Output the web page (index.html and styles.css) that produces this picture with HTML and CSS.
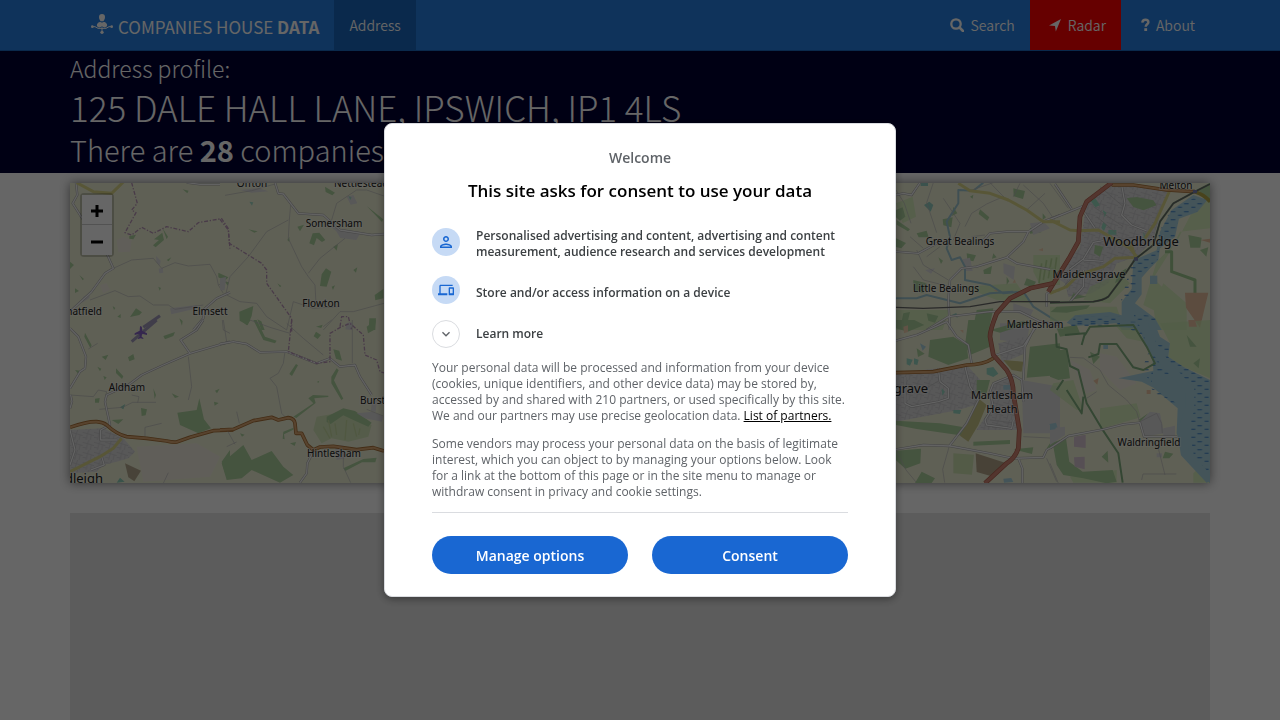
FILE: index.html
```html
<!DOCTYPE html>
<html lang="en">
<head>
<meta charset="utf-8">
<meta name="viewport" content="width=device-width, initial-scale=1">
<title>125 Dale Hall Lane, Ipswich - Companies House Data</title>
<link rel="stylesheet" href="styles.css">
</head>
<body>
<div class="page">
  <header class="navbar">
    <nav class="container nav">
      <a class="brand" href="#">
        <svg class="brand-icon" viewBox="0 0 66 60" aria-hidden="true">
          <path d="M33 0c6 0 9 4 9 9 0 6-3 10-5 13h-8c-2-3-5-7-5-13 0-5 3-9 9-9z"/>
          <path d="M20 28c4-5 9-5 13-2 4-3 9-3 13 2 4 5 3 10-2 12-5 1-8-1-11-3-3 2-6 4-11 3-5-2-6-7-2-12z"/>
          <path d="M4 38h8l9 5h24l9-5h8M33 40v12" fill="none" stroke="#fff" stroke-width="3"/>
          <circle cx="4" cy="38" r="4"/><circle cx="62" cy="38" r="4"/><circle cx="33" cy="55" r="5"/>
        </svg>
        <span>COMPANIES HOUSE <b>DATA</b></span>
      </a>
      <a class="nav-link active" href="#">Address</a>
      <span class="spacer"></span>
      <a class="nav-link" href="#"><svg class="nav-icon" viewBox="0 0 14 14" aria-hidden="true"><circle cx="6" cy="6" r="4.7" fill="none" stroke="#fff" stroke-width="2.3"/><path d="M9.5 9.500l3.500 3.500" stroke="#fff" stroke-width="2.600" stroke-linecap="round"/></svg>Search</a>
      <a class="nav-link radar" href="#"><svg class="nav-icon" viewBox="0 0 14 14" aria-hidden="true"><path d="M13 1L1 7.500l6 .5.800 5.500z"/></svg>Radar</a>
      <a class="nav-link about" href="#"><svg class="nav-icon narrow" viewBox="0 0 9 14" aria-hidden="true"><path d="M1.300 4.600C1.500 2.600 2.800 1.800 4.400 1.800c1.800 0 3 .9 3 2.400 0 2-2.700 2.100-2.700 4.500" fill="none" stroke="#fff" stroke-width="2.400"/><path d="M3.300 10.200h2.800V13H3.300z"/></svg>About</a>
    </nav>
  </header>

  <section class="banner">
    <div class="container">
      <p class="kicker">Address profile:</p>
      <h1>125 DALE HALL LANE, IPSWICH, IP1 4LS</h1>
      <h2>There are <b>28</b> companies</h2>
    </div>
  </section>

  <main class="container content">
    <div class="map">
      <svg class="map-art" viewBox="70 183 1140 300" preserveAspectRatio="xMidYMid slice" role="img" aria-label="Map of the Ipswich area">
        <defs>
          <pattern id="reeds" width="40" height="24" patternUnits="userSpaceOnUse"><path d="M2 5h14M24 16h12" stroke="#3f82c8" stroke-width="3"/></pattern>
          <pattern id="streets" width="34" height="30" patternUnits="userSpaceOnUse"><path d="M0 7l15 4 4-11M15 11l-5 19M15 11l19 6M26 15l-3 15M0 22l12 2" fill="none" stroke="#c4c4c6" stroke-width="2"/></pattern>
        </defs>
        <rect class="land" x="70" y="183" width="1140" height="300"/>

        <g class="tile" transform="translate(60 170) scale(.3333)">
          <path class="bare" d="M170 210l20-10 25 10-5 35-35 2zM120 345l20-5 10 20-20 10z"/>
          <path class="wood" d="M368 58l18 4-4 8zM208 198l20-4-8 14-12-2zM282 208l25-20 5 22-25 22-8-6 18-16zM308 175l16 25-4 8zM30 275l12 10-12 12zM58 315l14 12-4 4zM45 355l12 8-12 6zM295 350l8 4-4 8zM228 415l18 12-8 8-28 6zM158 408l8 6-4 6zM172 440l10-8v12zM320 270l14-8-8 12zM475 308l30 14-10 10-20-10zM495 335l12 2-4 10zM358 445l10 8-2 14z"/>
          <path class="built" d="M288 258l14 14-2 14-10-8zM296 296l12-2 2 14-12 2zM330 415l80-10 2 10-78 18zM70 380l20-10-2 14-22 14z"/>
          <path class="lane" d="M160 295l55-25 65-5 25 30 40-17 40 10 65-5 20 37 5 25 15 25M90 390l75-28 40 18 35-2 40 27h45l20 13 85-13M475 345l25-10"/>
          <path class="case" d="M48 38l4 37-14 25 22 35 80 115 20 45-25 15-40 55-65 60M510 367l-40 18-40 35v25l-30 35M380 38l40 5h60"/>
          <path class="road" d="M48 38l4 37-14 25 22 35 80 115 20 45-25 15-40 55-65 60M510 367l-40 18-40 35v25l-30 35M380 38l40 5h60"/>
          <path class="yellow" d="M50 38l50 27 55 5 35-34"/>
          <path class="bound" d="M215 38l17 62-17 20 13 8-33 60 20 7 30-23 35 18 40-20 65 15 30-27 70-12 20 30 5 60"/>
          <path d="M250 472l50-35" stroke="#a09ab8" stroke-width="9"/>
          <path d="M240 468l8 12h-8z" fill="#8461c4"/>
        </g>

        <g class="tile" transform="translate(220 170) scale(.3333)">
          <path class="wood" d="M315 50l30 18-8 8-20-10zM440 108l50 40-4 8zM268 220l10-30 20-2 18 22-10 6-16-12-8 22zM318 295l16 10-14 45-20-2 5-35zM400 300l12-8-4 16zM58 425l42-17-5 30-12 28-24-14zM464 375l26-18v28l-24 6zM448 445h20l-2 35h-20zM112 448l12 6 10 26h-10zM172 340l12 8-4 4zM232 170l20-6-12 20zM335 350l10-4-6 14zM180 65l24 12zM85 178l28 6-10 4zM288 470l20-6-4 10zM202 210l6-10v16zM340 230l14-8-4 20z"/>
          <path class="built" d="M330 168l45 12 48 6-14 24-48-6-12-20zM60 60l55-6 30 10-50 4zM380 80l20-5 12 25-20 4zM0 325l18-4-4 40H0zM380 460l16 4-4 16-16-2z"/>
          <path d="M88 95l12 2-4 10zM385 78l10 4-4 8z" fill="#a4d8c2"/>
          <path class="lane" d="M212 105l-4 45-3 55 40 85 20 30 20 25 3 55M205 150l-65 35-55 75-55 60-12 50M265 310l35-45 75-60M335 150l15-50 60-40h30l52 18M20 375l40 20 50 5 30 40 60 40M310 480l50-55h40l92-25M200 480l20-85 60 20 80-5M15 76l80-14 70-20"/>
          <path class="case" d="M165 38l10 32 15 2 45 58 75 5 50 45 95 15 40-3"/>
          <path class="road" d="M165 38l10 32 15 2 45 58 75 5 50 45 95 15 40-3"/>
          <path class="bound" d="M0 148l25 32 3 40 97 60 15 20v40l75 105v40M360 470l5-30h20l10 40"/>
        </g>

        <g class="tile" transform="translate(60 320) scale(.3333)">
          <path class="built" d="M30 330l100-5 60 30 35 40-20 20-35 10-40 10-20 20-80 5z"/>
          <path d="M30 330l100-5 60 30 35 40-20 20-35 10-40 10-20 20-80 5z" fill="url(#streets)"/>
          <path class="bare" d="M230 380l180-10 70 40-30 60-200 15zM215 240l75 18z"/>
          <path class="wood" d="M352 278l58-8 8-35 14 63 21 27-38 15-55-25zM510 390l-25 35 12 40 13 10zM310 48l35-12-5 12-25 10zM75 38l20 38-4 8-18-34zM125 110l20-6-8 16zM204 112l16-10 4 16-16 6zM168 145l22 24-4 8-18-18zM112 140l12 6-4 8zM243 264l18 4-4 18-12 2zM105 236l14-2-2 14h-12zM280 205l8 20-4 12zM335 220l22 10-12 4zM465 212l14-6-8 14zM462 245l14 4-12 8zM155 300l35-2-15 14zM45 150l15 2-5 10zM130 168l10 4-6 8z"/>
          <path d="M195 430l48 22-20 32-18-12z" fill="#b5a98e"/>
          <path d="M180 262l16-10-6 16zM170 488l10-15 14 12z" fill="#8fcdb8"/>
          <path class="lane" d="M85 87l28-17M385 110l10 90-10 40M30 225l70 5 15-20 25 5-5 20M118 268l70-6 30-15h70M215 225l22 5-4 18M325 458l-15 32M255 350v-28l50-12M487 0l3 30 20 10"/>
          <path class="case" d="M430 0l-20 30-48 30 28 40M510 65l-120 35-80 35-65 30-40 30-65 30-5 20 15 70-28 15v30h50M30 25l25 25 23 60-3 35-15 10-30 50M32 225l4 20-6 20M30 330l15 60-15 45M125 410l8 25-40 15"/>
          <path class="road" d="M430 0l-20 30-48 30 28 40M510 65l-120 35-80 35-65 30-40 30-65 30-5 20 15 70-28 15v30h50M30 25l25 25 23 60-3 35-15 10-30 50M32 225l4 20-6 20M30 330l15 60-15 45M125 410l8 25-40 15"/>
          <path class="yellow" d="M30 455l90-45 40-25 25-30"/>
          <path class="orange-case" d="M30 322q50-18 80-17 20 2 30 10 30 28 60 35l60 5 60 8q20 5 30 3l40-14 70-20 60-2"/>
          <path class="orange" d="M30 322q50-18 80-17 20 2 30 10 30 28 60 35l60 5 60 8q20 5 30 3l40-14 70-20 60-2"/>
          <path d="M215 65l75-65" stroke="#a09ab8" stroke-width="9"/>
          <path d="M240 20c3-3 6 0 6 4v8l15 8v5l-15-4-1 9 5 4v3l-8-2-8 2v-3l5-4-1-9-14 4v-5l15-8z" fill="#8461c4"/>
        </g>

        <g class="tile" transform="translate(220 320) scale(.3333)">
          <path class="golf" d="M290 290l30-5 60-10 75 40-10 35-60 15-50-10-30 15-25-40z"/>
          <path class="wood" d="M5 430l65-55 25 45 60-27 35 47 30 25-40 23-85-38-30 25-45 5zM320 290l50-25 35 8 50 35-10 12-45-20-30-14-38 26-12-6zM220 290l60-40-15-15 14-10 46 2v4l-42 4 4 14-58 45zM350 145l6 6-14 30 28 55-6 4-30-50v-20zM288 35l15 10-10 12-12-8zM440 20l28-20-6 30-18 10zM110 0l25 50 35 12-5 8-35-10-30-60zM62 0h30l-12 16zM340 88l18 4 8 30-18-6zM208 162l20-30 6 4-18 32zM190 335l30-12v6l-28 14 2 15-6-2zM60 340l14 4-8 6zM210 370l18-4-4 12zM370 445l60-28 40-4-4 14h-40l-50 26zM290 186l8-4-2 6z"/>
          <path d="M325 300l10 50M345 310l5 35M380 300l-5 60M400 310l10 40M310 320l20 35M420 325l-4 20" stroke="#c9dba4" stroke-width="4" fill="none"/>
          <path class="built" d="M345 380l25-5 5 40-25 5zM455 245l16-4-4 35-14-4zM410 280l50-5 30 15-5 15-50-10zM378 10l16-4 8 12-16 8z"/>
          <path class="lane" d="M195 95l-5 35-15 30-25 15 20 25 15 80 15 15M200 10l50 45 60 50M310 20l25-20M20 328l25 45M20 380l30-14M50 275l8 35M370 400v40l22 48M397 0v130M10 0l10 65M90 0l60 22 60 18M440 268l50 20"/>
          <path class="case" d="M0 72l40-7 40 7 40 25 80-2 90 35 40-15 30 25 45-5 15 35 35 55M280 395l-18 35-2 30-20 28"/>
          <path class="road" d="M0 72l40-7 40 7 40 25 80-2 90 35 40-15 30 25 45-5 15 35 35 55M280 395l-18 35-2 30-20 28"/>
          <path class="orange-case" d="M0 330l40-2 60-26 55-10 20 8 30-7q18 2 20 17l3 30h17l17 35 18 15 20-9 40-2 70 10 50-6 32 10"/>
          <path class="orange" d="M0 330l40-2 60-26 55-10 20 8 30-7q18 2 20 17l3 30h17l17 35 18 15 20-9 40-2 70 10 50-6 32 10"/>
          <path class="bound" d="M215 0l-10 95 85 35 40-5V40l35-20 25-10 40 35 5 60 35 15 10 35 20 6"/>
        </g>

        <g class="tile" transform="translate(890 170) scale(.3333)">
          <path class="grass" d="M18 420h160l-20 60H18zM220 350l160-10 40 60-100-10zM430 255h80v90h-60l-20-40zM18 100l50-20 10 60-40 20z"/>
          <path class="wood" d="M18 120l20-8 8 28-16 12-12-10zM370 55l35 8-6 24-28-8zM270 118l28 24-6 10-26-20zM158 148l30-6-4 30-24-6zM420 175l30-12 4 24-34 4zM80 190l30-8 6 20H86zM18 205l30 14-14 16-16-4zM260 420l50-5-12 60-30 5-14-30zM410 325l28 10-8 16-28-6zM70 330l40 10-10 30-30-10zM20 150l40 28-6 6-34-20zM310 250l10 12-14 4zM280 300l26-12-4 24h-20zM350 320l8 14-8 10zM145 262l14 10-6 10zM110 430l35 8-10 20-20-6zM40 430l20-4-8 34-20 8zM458 130l10 12-10 8zM240 80l10-6-2 12zM230 250l28 6-8 18-18-4zM190 110l12 20-16 8z"/>
          <path d="M102 105l16-10 12 10-8 20zM92 38h22v10H92zM185 435l14-6 4 14z" fill="#94cdc0"/>
          <path class="built" d="M105 300l30-5-12 16zM218 268l22-5 8 40h-20zM340 280l35 10-4 40-30-20zM420 160l40-5 20 20-50 20zM370 400l60 20-10 20-50-15z"/>
          <path d="M455 280l-8 60M470 270l-10 60M485 265l-10 60M500 262l-8 60" stroke="#b8d69a" stroke-width="5"/>
          <path d="M445 240l14-6v10zM368 338l6-10 4 10zM310 360h12v6z" fill="#f0cfae"/>
          <path class="river" d="M280 38l-30 24-45-2v40l-35 55 10 45-10 35 15 35 25-8 15 28v40l75 15 40 25 60-5 30 45 80 50M18 385h62l30-10 100 25 90-30 70-5"/>
          <path class="lane" d="M225 170l20-40 45-28 50-22 15 10M300 38l55 57M400 45l60 55 40 60M160 85l50 75-20 50M18 60l25 40 20 60M80 240l20 45 75 45M60 200l40 35M245 200l40-5M180 350l-80-20-30-40M130 38l-20 60 30 90M410 120l55-50M110 260l40-30M390 40l-20 40M240 62l70-24"/>
          <path class="case" d="M18 245l67 5 65-35M18 75l22-5 25 5 25-37M110 480l65-40 125-15h90l60 30 60 10M180 480l-5-90 5-60 35-35 45-5 90-28 50-47 15-30h-65l-50 5-30 32M415 185l45-30 50-20M350 262l30 18 110 20M470 370l40-10M470 370v40"/>
          <path class="road" d="M18 245l67 5 65-35M18 75l22-5 25 5 25-37M110 480l65-40 125-15h90l60 30 60 10M180 480l-5-90 5-60 35-35 45-5 90-28 50-47 15-30h-65l-50 5-30 32M415 185l45-30 50-20M350 262l30 18 110 20M470 370l40-10M470 370v40"/>
          <path class="yellow" d="M205 40l35 22 60 8 55 20 55 30 50 35h50"/>
          <path class="rail" d="M18 412l82 3 140-5 90-15h180"/>
        </g>

        <g class="tile" transform="translate(1050 170) scale(.3333)">
          <path class="built" d="M110 95l80-50 165 10-25 80-20 75-50 50-60 20-25 60-50 30-70 10-10-40-30-20 75-90z"/>
          <path d="M110 95l80-50 165 10-25 80-20 75-50 50-60 20-25 60-50 30-70 10-10-40-30-20 75-90z" fill="url(#streets)"/>
          <path class="grass" d="M440 100l40-15v90l-90 10-30 60-50 80 50 50-20 60-60-30 40-130 60-60zM120 350l90-40 30 30-60 60-80-10zM340 340l70 60v80h-90l-10-70zM0 410h200l10 30-210 15zM0 290h15l-5 60-10 10z"/>
          <path class="wood" d="M230 85l30-4 50 10 10 15-40 15-30-10zM135 225l25 5-10 30-18-10zM205 310l25-15-10 30-25 15zM20 410l100-4-10 10-60 12-48-2zM415 195l40 8-4 30h-30zM445 60l35-20v60zM450 240l25-8-6 28zM70 370l40 10-50 10z"/>
          <path d="M345 245h20v60l70 25v50" fill="none" stroke="#9dc890" stroke-width="9"/>
          <path d="M405 368h70l-25 105-42-60zM452 210l28-4v12z" fill="#e7bd9d"/>
          <path d="M120 90l14-8 16 24-14 6zM158 120l12 8-6 14zM175 180h24v14h-24zM160 155l10 10-8 18-8-10zM280 185l10 20-8 10z" fill="#9adcc0"/>
          <path class="water" d="M430 75l42 15-30 36-55 20-12 55-45 34-5 35-25 25-25 28v50l-20 27 60 45 20 35H215l-15-20-130 8-20-10 25-22 105-10 35 10v-40l30-40 5-85 70-30 10-56 35-65z"/>
          <path class="water" d="M300 317h22v25h-22z"/>
          <path d="M430 85l40 5-30 36-55 20-12 55-45 34-5 35-60 45-5 50-45 35V390l35-120 70-30 10-56 35-65zM70 440h140v28H70zM250 430l65 10 10 40h-60z" fill="url(#reeds)"/>
          <path class="lane" d="M0 40l55 75M150 50l70 60M130 110l90 60M200 210l60-10M140 140l60 50M40 350l50-50"/>
          <path class="case" d="M0 148l105-42M15 42l50 75M105 130l30 45M215 45l10 55-10 35 30 30 45 18M160 212l-30 5-30 50-40 30M100 270l60 4M100 300v50l-40 45"/>
          <path class="road" d="M0 148l105-42M15 42l50 75M105 130l30 45M215 45l10 55-10 35 30 30 45 18M160 212l-30 5-30 50-40 30M100 270l60 4M100 300v50l-40 45"/>
          <path class="yellow" d="M0 150l60 30 25 2 60-2 35 20 60 35 20 25M0 370l50-20 35-35 75-25 35-25 70-3M360 60l-45 100-30 45M240 215l14 40"/>
          <path class="orange-case" d="M185 45h65l100 15 85 5"/><path class="orange" d="M185 45h65l100 15 85 5"/>
          <path d="M435 65q30 10 45 30" fill="none" stroke="#b5a848" stroke-width="11"/>
          <path class="foot" d="M0 398l130-3q30-4 45-15l45-60 35-52 55-43 20-70 40-55 65-35 45-23"/>
          <path class="rail" d="M0 398l130-3q30-4 45-15l45-60 35-52 55-43 20-70 40-55 65-35 45-23"/>
          <path class="trunk-case" d="M185 38l-75 57-20 45-5 75-25 45-65 105"/><path class="trunk" d="M185 38l-75 57-20 45-5 75-25 45-65 105"/>
          <path d="M252 262h12v10h-12zM429 60h12v10h-12z" fill="#7981b0"/>
        </g>

        <g class="tile" transform="translate(890 320) scale(.3333)">
          <path class="built" d="M18 160l212-25 50 55-25 65-50 15-187 35zM300 200l70-40 20 170H260l40-60zM325 70l80-20v50l-70 30zM395 180l115 20v140H400zM330 10h90l-10 60-80-10z"/>
          <path d="M18 160l212-25 50 55-25 65-50 15-187 35zM300 200l70-40 20 170H260l40-60zM325 70l80-20v50l-70 30z" fill="url(#streets)"/>
          <path class="wood" d="M235 0h60l5 80-60 25-15-30zM18 0h55l30 15-50 20-35-10zM120 60l70-10 40 25 5 40-60 20-60-25zM420 80l90-10v95l-100 8zM18 302l132 8 90 15-20 22-140-20-62-12zM250 365l110-5v12l-110 5zM18 392l75-6-2 44-45 16-28-25zM95 455l40 20-10 14H75zM300 30l100-28 20 8-90 28zM370 388l60-6-4 20zM80 85l24 16-20 10zM260 180h40l-10 40h-30z"/>
          <path d="M265 235l25 20-25 60-30 50-25-18 30-50zM340 120l60 5-5 30-30-5z" fill="#c9c587"/>
          <path d="M257 400l88 28-35 42-50-14z" fill="#b5a589"/><path d="M190 400l62 4-6 60-56-4z" fill="#cfe3b2"/>
          <path d="M50 115l18 4-8 18-10-4zM72 115l14 4-4 16-10-2zM190 270h24l-4 12-20-2zM290 145l20-4 15 20-15 10-20-8zM155 205l10 10-8 12z" fill="#9ad6c2"/>
          <path class="water" d="M478 312l20-4 5 15-15 6zM340 476l24-2 6 12-28 2zM90 70l18 10-10 12zM340 195h20v14h-20z"/>
          <path d="M40 20l14-4v20l-12 4zM210 30h10v10z" fill="#f0cfae"/>
          <path class="lane" d="M18 390l30 60 30 36M178 378l-20 70 6 40M400 350l80 4 30-20M470 415l30 70M150 180l-50 30M300 300l80 10"/>
          <path class="case" d="M18 62l62-17 90-40M170 5l30 45 35 25 10 55M310 108l90-30 45-68M225 140l15 60 25 40-35 70-52 68M18 388l82-13 80 3 120 22 70 15 90-3 10-22 40-25M400 245l-5-65-25-15-60 25-10 25 10 45-25 40 5 15 75 10 5-25M400 180l5-100 30-60M145 145l5 40 25 20v30l-30 10-80 15-20-10v-80M385 415l12 30v44"/>
          <path class="road" d="M18 62l62-17 90-40M170 5l30 45 35 25 10 55M310 108l90-30 45-68M225 140l15 60 25 40-35 70-52 68M18 388l82-13 80 3 120 22 70 15 90-3 10-22 40-25M400 245l-5-65-25-15-60 25-10 25 10 45-25 40 5 15 75 10 5-25M400 180l5-100 30-60M145 145l5 40 25 20v30l-30 10-80 15-20-10v-80M385 415l12 30v44"/>
          <path class="orange-case" d="M18 158l112-3 100-20q50 0 80-20"/><path class="orange" d="M18 158l112-3 100-20q50 0 80-20"/>
          <path class="trunk-case" d="M490 -110l-70 15-60 30-40 45q-20 50-20 70l10 55 40 45q20 30 20 70l18 110-3 55q-10 30-35 45l-65 60"/>
          <path class="trunk" d="M490 -110l-70 15-60 30-40 45q-20 50-20 70l10 55 40 45q20 30 20 70l18 110-3 55q-10 30-35 45l-65 60"/>
        </g>

        <g class="tile" transform="translate(1050 320) scale(.3333)">
          <path class="grass" d="M330 10l150-10v175l-80-35-45-30 5-40zM150 265l110-15 12 42-122 35zM200 20l60 5 20 40-50-10zM10 190l60-10 30 90H80L0 210zM60 470l140-20v38H70zM430 460l20-20 30 48h-50z"/>
          <path class="wood" d="M0 90h50l10 85-35 5-25-10zM20 25l60-10 10 25-60 10zM120 95l30 15-20 22zM0 370l48-15 10 70 40 30 90-5 12 35-30 5-70-15-60-10-20-30-10-55-20 5zM155 410l18-18 2 36zM345 395l25 6-12 14h-20zM410 45l10 35h20zM430 130l20-15-4 30zM265 300l30-20-20 24z"/>
          <path class="bare" d="M150 100l50 10 60 80-50 20-60-60zM60 120l60 30 20 60-30 10z"/>
          <path class="water" d="M225 0h85l20 50 30 20-5 40 45 30 80 40v310l-40-38-40-52-20-60 3-75-73-62-35-18-70-10 105-23-2-30-36-82z"/>
          <path d="M310 60l50 10-5 40 45 30 80 40v310l-40-38-20-112 10-110-60-60-60-20-5 40-30-40zM300 200l80 50v20l-60-45z" fill="url(#reeds)"/>
          <path d="M220 5h50l10 30 30 40-40-20zM60 0h120v18H60z" fill="url(#reeds)"/>
          <path d="M275 0l30 70 40 60 75 80v60l-25 60 10 70 75 80" fill="none" stroke="#aad3df" stroke-width="26"/>
          <path class="foot" d="M18 40l2 40 30 8 10 50 25 12 25 100 45 75 50 75 13 88M45 45l60-5-10 35M105 45l15-25 130-5 40 65 25 50-35 20-30-8-50-70h-50l-5 30-30 10M20 210l20-30M50 210l45 70 5-50"/>
          <path d="M72 350l35-6v40l-35-4zM72 412l32-2v38l-30-8z" fill="#d7c5d1"/>
          <path d="M415 0h20l6 20h-24zM130 182l16-8-4 20zM290 210h12v12h-12z" fill="#ebc4a4"/>
          <path class="built" d="M270 305l30-30 30 5 12 60-60 10zM340 325l35-8v35h-35zM0 325l45-5v25L0 375zM320 400h16v12h-16z"/>
          <path class="water" d="M0 312l20 2-4 14-16 2zM160 75h14v12h-14z"/>
          <path class="lane" d="M60 112l40 2 50 36 25 45 55 45 30 35 10 35M270 305l50-25 15 30 2 30M285 350l40 35 20 80M275 480l4-18h100M0 430l25 60M110 235l30-20"/>
          <path class="case" d="M0 385l55-37 105-20 60-15 50-5 12 42h100"/><path class="road" d="M0 385l55-37 105-20 60-15 50-5 12 42h100"/>
        </g>

        <g class="labels">
          <text x="252" y="187">Offton</text><text class="from" x="334" y="187">Nettlestead</text>
          <text x="334" y="227">Somersham</text><text x="321" y="307">Flowton</text>
          <text x="210" y="315">Elmsett</text><text class="to" x="102" y="315">Whatfield</text>
          <text x="127" y="391">Aldham</text><text class="from" x="360" y="404">Burstall</text>
          <text x="334" y="457">Hintlesham</text><text class="town to" x="103" y="483">Hadleigh</text>
          <text x="960" y="245">Great Bealings</text><text x="946" y="292">Little Bealings</text>
          <text x="1176" y="189">Melton</text><text class="town" x="1141" y="246">Woodbridge</text>
          <text class="mid" x="1089" y="278">Maidensgrave</text><text x="1035" y="328">Martlesham</text>
          <text class="town to" x="928" y="393">Kesgrave</text><text class="mid" x="1002" y="399">Martlesham</text>
          <text class="mid" x="1002" y="413">Heath</text><text x="1149" y="446">Waldringfield</text>
        </g>
      </svg>
      <div class="zoom">
        <button type="button" aria-label="Zoom in"><svg viewBox="0 0 14 14" aria-hidden="true"><path d="M1 7h12M7 1v12"/></svg></button>
        <button type="button" aria-label="Zoom out"><svg viewBox="0 0 14 14" aria-hidden="true"><path d="M1 7h12"/></svg></button>
      </div>
    </div>
    <div class="panel"></div>
  </main>
</div>

<div class="overlay">
  <div class="dialog" role="dialog" aria-modal="true" aria-labelledby="consent-title">
    <p class="welcome">Welcome</p>
    <h2 class="title" id="consent-title">This site asks for consent to use your data</h2>
    <ul class="purposes">
      <li>
        <span class="badge"><svg class="person" viewBox="0 0 24 24" aria-hidden="true"><path d="M12 6a2 2 0 1 1 0 4 2 2 0 0 1 0-4m0 10c2.700 0 5.800 1.290 6 2H6c.23-.72 3.310-2 6-2m0-12C9.790 4 8 5.790 8 8s1.790 4 4 4 4-1.790 4-4-1.790-4-4-4zm0 10c-2.670 0-8 1.340-8 4v2h16v-2c0-2.660-5.330-4-8-4z"/></svg></span>
        <span>Personalised advertising and content, advertising and content measurement, audience research and services development</span>
      </li>
      <li>
        <span class="badge"><svg viewBox="0 0 24 24" aria-hidden="true"><path d="M4 6h18V4H4c-1.100 0-2 .9-2 2v11H0v3h14v-3H4V6zm19 2h-6c-.55 0-1 .45-1 1v10c0 .55.45 1 1 1h6c.55 0 1-.45 1-1V9c0-.55-.45-1-1-1zm-1 9h-4v-7h4v7z"/></svg></span>
        <span class="single">Store and/or access information on a device</span>
      </li>
    </ul>
    <button class="learn" type="button">
      <span class="badge plain"><svg viewBox="0 0 24 24" aria-hidden="true"><path d="M7.410 8.590L12 13.170l4.590-4.580L18 10l-6 6-6-6z"/></svg></span>
      <span>Learn more</span>
    </button>
    <p class="body">Your personal data will be processed and information from your device (cookies, unique identifiers, and other device data) may be stored by, accessed by and shared with 210 partners, or used specifically by this site. We and our partners may use precise geolocation data. <a href="#">List of partners.</a></p>
    <p class="body">Some vendors may process your personal data on the basis of legitimate interest, which you can object to by managing your options below. Look for a link at the bottom of this page or in the site menu to manage or withdraw consent in privacy and cookie settings.</p>
    <div class="actions">
      <button type="button">Manage options</button>
      <button type="button">Consent</button>
    </div>
  </div>
</div>
</body>
</html>
```
FILE: styles.css
```css
* { box-sizing: border-box; }

body {
  margin: 0;
  height: 100vh;
  overflow: hidden;
  background: #fff;
  font-family: "Noto Sans CJK SC", "Noto Sans", sans-serif;
  font-size: 14px;
}

h1, h2, p, ul { margin: 0; padding: 0; }

.page { display: flex; flex-direction: column; min-height: 100vh; }

.container { width: 100%; max-width: 1170px; margin: 0 auto; padding: 0 15px; }

/* Navigation */
.navbar { background: #2780e3; border-bottom: 1px solid #1967be; }
.nav { display: flex; height: 50px; padding: 0 15px 0 0; }
.nav a { color: #fff; text-decoration: none; }
.brand { display: flex; align-items: center; gap: 5px; padding: 3px 15px 0 36px; font-size: 17px; }
.brand-icon { width: 22px; height: 20px; margin-bottom: 5px; fill: #fff; }
.nav-link { display: flex; align-items: center; gap: 6px; padding: 0 15px; font-weight: 350; line-height: 20px; }
.nav .active { background: #1967be; }
.spacer { flex: 1; }
.nav-icon { width: 14px; height: 14px; fill: #fff; }
.narrow { width: 9px; }
.nav .radar { background: #f00; padding-left: 18px; }
.about { padding-left: 20px; }

/* Banner */
.banner { height: 122px; overflow: hidden; background: #003; color: #fff; font-weight: 300; }
.banner b { font-weight: 700; }
.kicker { font-size: 23px; line-height: 35px; }
.banner h1 { font-size: 35px; line-height: 42px; font-weight: 300; }
.banner h2 { font-size: 29px; line-height: 43px; font-weight: 300; }

/* Map */
.content { display: flex; flex: 1; flex-direction: column; gap: 30px; padding-top: 10px; }
.map { position: relative; height: 300px; box-shadow: 0 0 10px rgba(0, 0, 0, .5); }
.map-art { display: block; width: 100%; height: 100%; }
.zoom {
  position: absolute; top: 10px; left: 10px;
  border: 2px solid rgba(0, 0, 0, .2); border-radius: 4px; background-clip: padding-box;
}
.zoom button {
  display: flex; align-items: center; justify-content: center;
  width: 30px; height: 30px; padding: 3px 0 0; border: 0; background: #fff;
}
.zoom button:first-child { border-bottom: 1px solid #ccc; }
.zoom svg { width: 14px; height: 14px; fill: none; stroke: #000; stroke-width: 3; }
.panel { flex: 1; background: #e6e6e6; }

.land { fill: #eef0d5; }
.tile path { stroke-linejoin: round; }
.wood { fill: #add19e; }
.grass { fill: #cdebb0; opacity: .7; }
.golf { fill: #d4e7b8; }
.bare { fill: #f0ebdf; }
.built { fill: #dcdbdc; }
.water { fill: #aad3df; }
.river { fill: none; stroke: #9ec5d0; stroke-width: 6; }
.lane { fill: none; stroke: #bbb; stroke-width: 2; }
.case { fill: none; stroke: #aaa; stroke-width: 7; }
.road { fill: none; stroke: #f4f4f4; stroke-width: 4; }
.yellow { fill: none; stroke: #dbd88a; stroke-width: 9; }
.orange-case { fill: none; stroke: #a87038; stroke-width: 11; }
.orange { fill: none; stroke: #dba974; stroke-width: 6; }
.trunk-case { fill: none; stroke: #b0604c; stroke-width: 14; }
.trunk { fill: none; stroke: #d08473; stroke-width: 10; }
.bound { fill: none; stroke: #b795b5; stroke-width: 4; stroke-dasharray: 12 5 4 5; }
.tile .rail { fill: none; stroke: #666; stroke-width: 4; }
.foot { fill: none; stroke: #82ae80; stroke-width: 6; }
.labels {
  font-family: "Noto Sans", sans-serif; font-size: 10px; text-anchor: middle;
  fill: #222; stroke: rgba(255, 255, 255, .4); stroke-width: 2px; paint-order: stroke;
}
.mid { font-size: 11px; }
.town { font-size: 13px; }
.from { text-anchor: start; }
.to { text-anchor: end; }

/* Consent dialog */
.overlay {
  position: fixed; inset: 0;
  display: flex; align-items: center; justify-content: center;
  background: rgba(0, 0, 0, .6);
}
.dialog {
  width: 512px; max-width: 100%;
  padding: 24px 47px 22px;
  border: 1px solid #dadce0;
  border-radius: 8px; background: #fff;
  box-shadow: 0 2px 8px rgba(0, 0, 0, .4);
  font-family: "Open Sans", sans-serif;
  font-size: 12px; line-height: 16px; color: #3c4043;
}
.welcome { font-size: 14px; line-height: 20px; font-weight: 600; text-align: center; color: #5f6368; }
.title { margin-top: 11px; font-size: 17px; line-height: 24px; font-weight: 600; text-align: center; color: #000; }
.purposes { display: flex; flex-direction: column; gap: 16px; margin-top: 25px; list-style: none; font-weight: 600; }
.purposes li { display: flex; align-items: flex-start; gap: 16px; }
.badge {
  display: flex; flex: none; align-items: center; justify-content: center;
  width: 28px; height: 28px; border-radius: 50%; background: #c6daf5;
}
.badge svg { width: 16px; height: 16px; fill: #1967d2; }
.badge .person { width: 18px; height: 18px; }
.single { padding-top: 9px; }
.learn {
  display: flex; align-items: center; gap: 16px; margin-top: 16px; padding: 0;
  border: 0; background: none; color: inherit; font: inherit; font-weight: 600;
}
.plain { border: 1px solid #dadce0; background: #fff; }
.plain svg { fill: #5f6368; }
.body { margin-top: 12px; color: #5f6368; }
.body a { color: #000; font-weight: 500; }
.actions { display: flex; gap: 24px; margin-top: 12px; padding-top: 23px; border-top: 1px solid #dadce0; }
.actions button {
  flex: 1; height: 38px; border: 0; border-radius: 19px;
  background: #1967d2; color: #fff;
  font-family: inherit; font-size: 14px; font-weight: 600;
}
```
